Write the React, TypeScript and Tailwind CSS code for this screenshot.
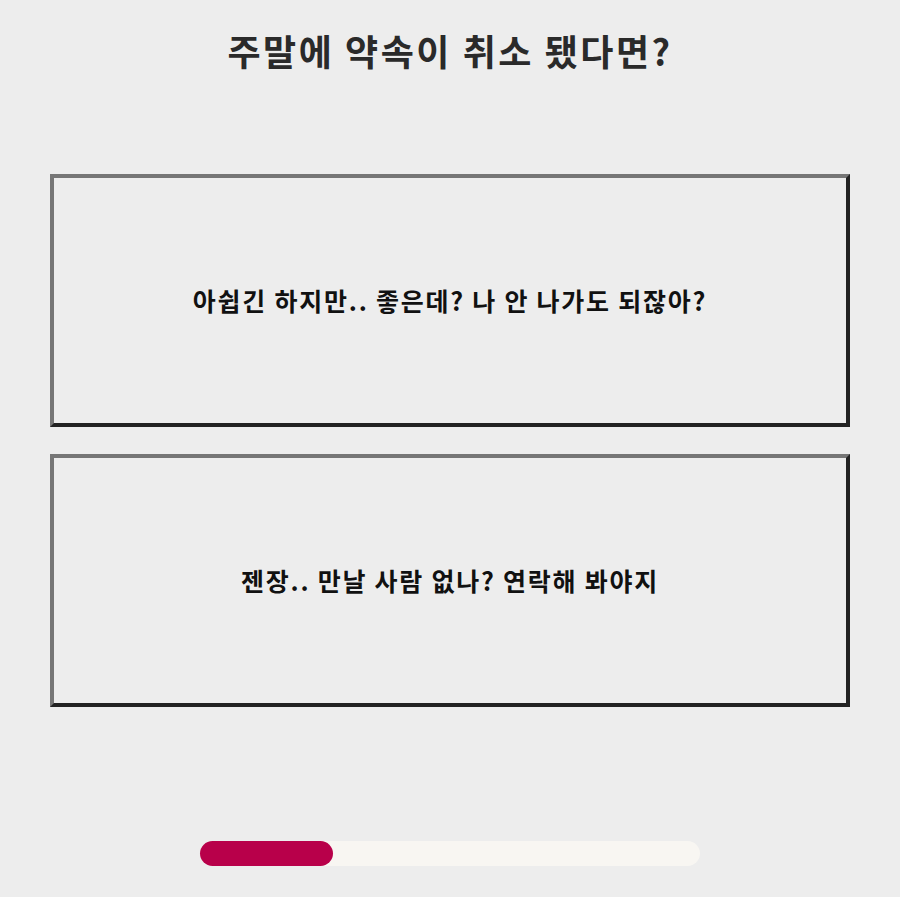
import React from "react";

const choices = [
  "아쉽긴 하지만.. 좋은데? 나 안 나가도 되잖아?",
  "젠장.. 만날 사람 없나? 연락해 봐야지",
];

const progress = 133 / 500;

export default function App() {
  return (
    <div
      className="min-h-[897px] w-full bg-[#ededed] px-[50px]"
      style={{ fontFamily: '"Noto Sans CJK KR", "Noto Sans", sans-serif' }}
    >
      <h1 className="pt-[30px] text-center text-[36px] font-bold leading-[40px] tracking-[0.07em] text-[#2a2a2a]">
        주말에 약속이 취소 됐다면?
      </h1>

      <div className="mt-[104px] flex flex-col gap-[27px]">
        {choices.map((text) => (
          <button
            key={text}
            className="flex h-[253px] w-[800px] items-center justify-center border-[4px] border-b-[#222] border-l-[#767676] border-r-[#222] border-t-[#767676] bg-[#ededed] text-[25px] font-bold tracking-[0.07em] text-[#111]"
          >
            {text}
          </button>
        ))}
      </div>

      <div className="mx-auto mt-[134px] h-[25px] w-[500px] rounded-full bg-[#f8f6f2]">
        <div
          className="h-full rounded-full bg-[#b8004a]"
          style={{ width: `${progress * 100}%` }}
        />
      </div>
    </div>
  );
}
